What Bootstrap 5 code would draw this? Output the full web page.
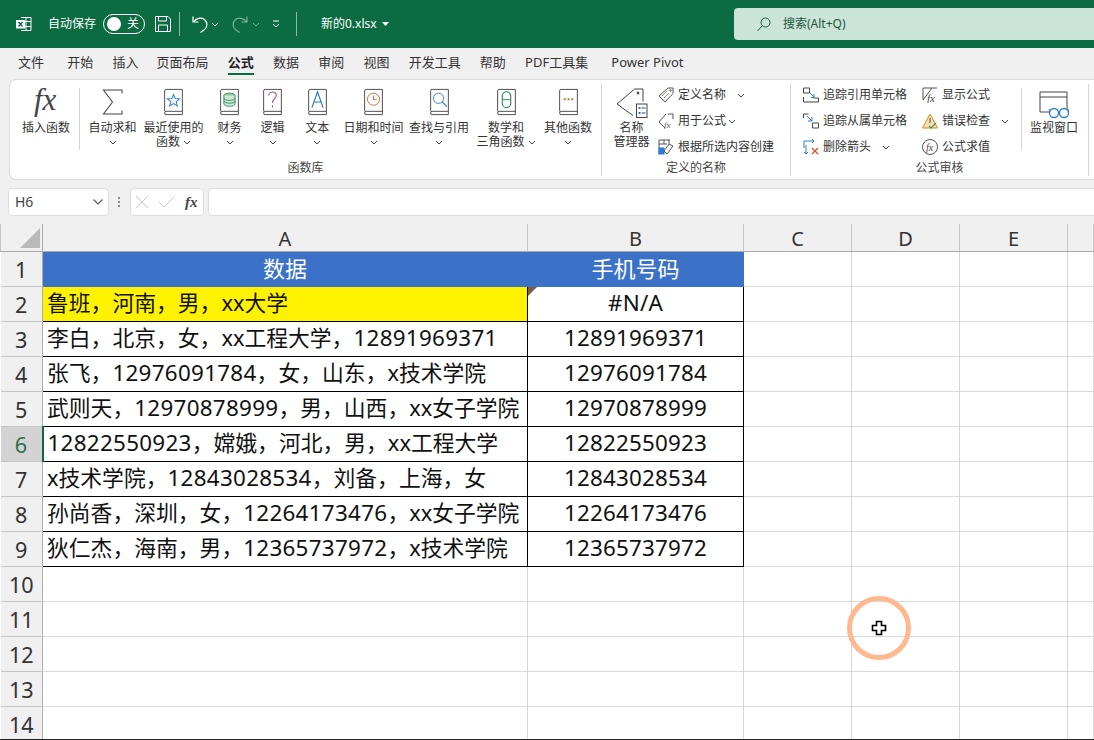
<!DOCTYPE html>
<html lang="zh"><head><meta charset="utf-8"><title>新的0.xlsx</title>
<link href="https://cdn.jsdelivr.net/npm/bootstrap@5.3.0/dist/css/bootstrap.min.css" rel="stylesheet">
<style>
html,body{height:740px;overflow:hidden}
body{width:1094px;position:relative;background:#f0f0f0;font-family:"Noto Sans","Noto Sans CJK SC",sans-serif;font-size:12px;color:#333;line-height:14px}
svg{display:block;flex:none}
.tb{height:48px;background:#0b6c41;color:#fff;padding-left:16px}
.logo{margin-right:16px}
.autosave{width:55px}
.tog{width:42px;height:20px;border:1px solid #fff;border-radius:10px;padding:0 5px 0 3px;margin-right:10px}
.tog i{width:14px;height:14px;background:#fff;border-radius:50%}
.tb-sep{width:1px;height:24px;background:#8fbba6}
.dim{opacity:.45}
.m2{margin-left:2px}.m6{margin-left:6px}
.m12{margin-left:12px}
.fname{margin-left:24px;width:55px;white-space:nowrap}
.searchbox{margin-left:auto;width:360px;height:32px;background:#cbe3d9;border-radius:4px 0 0 4px;padding-left:23px;color:#22583f;gap:12px}
.tabs{height:31px;padding-left:18px;gap:19.2px;font-size:13px;line-height:29px;color:#333}
.tabs span{height:27px;white-space:nowrap}
.tabs .on{font-weight:700;color:#222;border-bottom:2.5px solid #0b6c41}
.t4{margin-left:4px}.tm1{margin-left:-1px}
.rib{margin-left:9px;height:101px;background:#fff;border:1px solid #dcdcdc;border-right:0;border-radius:7px 0 0 7px;padding-left:6px}
.vline{width:1px;background:#d4d4d4;flex:none}
.gr1,.gr2,.gr3{border-right:1px solid #d4d4d4;margin-top:4px;height:92px;flex:none}
.gr1{width:586px}.gr2{width:189px}.gr3{width:298px}
.tops{height:76px;padding-top:1px}
.glabel{text-align:center;color:#444;height:16px;line-height:16px;white-space:nowrap}
.pr6{padding-right:6px}
.rb{padding-top:3px;text-align:center;white-space:nowrap;flex:none;color:#333;font-family:"Liberation Sans","Noto Sans CJK SC",sans-serif}
.rb svg{margin:0 auto 5px}
.rb .fxi{margin:-6px auto -1px}
.rb .cv{margin:5px auto 0}
.rb .cvi{display:inline-block;margin:0 0 1px 3px;vertical-align:middle}
.w60{width:60px;margin-right:3px}.w55{width:55px}.w66{width:66px}.w67{width:67px}.w45{width:45px}.w41{width:41px}.w48{width:48.5px}.w64{width:64px}.w57{width:57px}
.sep1{height:62px;margin:3px 5px 0 0}
.smc{display:flex;flex-direction:column;gap:8px;padding-top:1px}
.smr{height:18px;gap:4px;white-space:nowrap}
.cvr{margin-left:7px}
.cvn{margin-left:-2px}
.mgr{width:45px;margin:0 4px 0 7px}
.mgr svg{margin:0 auto 3px}
.col2{width:121px}
.col3{width:119px;margin-left:12px}
.col4{width:99px}
.watch{width:66px;padding:6px 2px 0 0}
.watch svg{margin-bottom:2px}
.wsep{height:62px;margin-top:3px}
.fb{height:28px;margin-top:8px;padding-left:8px;color:#333}
.wbox{background:#fff;border:1px solid #dedede;border-radius:4px;height:28px}
.nbox{width:101px;padding:0 5px 0 6px;font-size:14px;color:#444}
.dots{width:21px;gap:2px}
.dots i{width:2px;height:2px;background:#8a8a8a}
.fxbox{width:74px;padding:0 3px 0 5px;gap:6px}
.inbox{width:890px;margin-left:4px;border-right:0;border-radius:4px 0 0 4px}
.shtwrap{margin-top:8px}
table.sht{table-layout:fixed;border-collapse:collapse;width:1094px;background:#fff;font-size:21.8px;color:#111}
table.sht td,table.sht th{padding:0;border:1px solid #d9d9d9;overflow:hidden;white-space:nowrap;font-weight:400;height:35px;line-height:33px}
table.sht td{vertical-align:top;line-height:32px}
.c0{width:42px}.ca{width:485px}.cb{width:216px}.cc,.cd,.ce{width:108px}
table.sht thead th{height:27px;padding-top:3px;line-height:24px;background:#f0f0f0;text-align:center;font-size:20px;color:#333;border-color:#c6c6c6;border-top:0;border-bottom:1px solid #ababab}
table.sht thead th.cnr{padding-top:0;border-right:1px solid #ababab}
.cnr svg{margin-left:19px}
table.sht th.rh{background:#f0f0f0;text-align:center;font-size:21.6px;color:#333;border-color:#c6c6c6;border-left:0;border-right:1px solid #ababab}
table.sht th.rsel{background:#d3d3d3;color:#2f6e50;border-right:2px solid #0d6b41}
table.sht td.hd{background:#3b72c8;color:#fff;text-align:center;border-color:#3b72c8;font-size:22px}
table.sht td.bk{border:1px solid #000;padding-left:4px}
table.sht td.num{border:1px solid #000;text-align:center;font-size:22.4px;letter-spacing:.2px}
table.sht td.yel{background:#fff200}
table.sht td.err{position:relative}
.dg{font-size:22.4px;letter-spacing:.3px}
.errtri{position:absolute;left:0;top:0;width:0;height:0;border-top:9px solid #7a5a48;border-right:9px solid transparent}
.ring{position:absolute;left:847px;top:596px;width:64px;height:64px;border:5px solid #ffb98f;border-radius:50%}
.cursor{position:absolute;left:871px;top:620px}
.botline{position:absolute;left:0;right:0;bottom:0;height:1px;background:#222}
</style></head><body>
<svg width="0" height="0" class="position-absolute">
<symbol id="book" viewBox="0 0 22 30"><path d="M1.500 25V3q0-1.500 1.500-1.500H20.500V28.500H3q-1.500 0-1.500-1.700T3 25H20.500" fill="#fff" stroke="#444" stroke-width="1"/></symbol>
<symbol id="cv" viewBox="0 0 8 5"><path d="M1 1l3 3 3-3" fill="none" stroke="#444" stroke-width="1"/></symbol>
</svg>

<div class="tb d-flex align-items-center">
 <svg class="logo" width="16" height="16" viewBox="0 0 16 16"><path d="M5 1.500h10v13H5" fill="#0b6c41" stroke="#fff"/><path d="M10 1.500v13M5 5.500h10M5 10.500h10" stroke="#fff"/><rect x="0" y="4" width="9" height="8.500" fill="#fff"/><path d="M2.500 6l4 4.500m0-4.500l-4 4.500" stroke="#0b6c41" stroke-width="1.400"/></svg>
 <span class="autosave">自动保存</span>
 <div class="tog d-flex align-items-center justify-content-between"><i></i><span>关</span></div>
 <svg width="16" height="16" viewBox="0 0 16 16" fill="none" stroke="#fff"><path d="M.5.500h12.500l2.500 2.500v12.500H.5zM3.500.500v4.500h8V.500M3.500 15.500V9h9v6.500"/></svg>
 <div class="tb-sep ms-2 me-2"></div>
 <svg class="ms-1" width="17" height="18" viewBox="0 0 17 18" fill="none" stroke="#fff" stroke-width="1.200"><path d="M1 1.500v5.500h5.500M1.500 7C4 3 9 2 12.500 4.500c3.500 3 3 8-.5 10.500l-3.500 2.500"/></svg>
 <svg class="m2" width="8" height="5" viewBox="0 0 8 5"><path d="M1 1l3 3 3-3" fill="none" stroke="#fff"/></svg>
 <svg class="dim m12" width="17" height="18" viewBox="0 0 17 18" fill="none" stroke="#fff" stroke-width="1.200"><path d="M16 1.500v5.500h-5.500M15.500 7C13 3 8 2 4.500 4.500c-3.500 3-3 8 .5 10.500l3.500 2.500"/></svg>
 <svg class="dim ms-1" width="8" height="5" viewBox="0 0 8 5"><path d="M1 1l3 3 3-3" fill="none" stroke="#fff"/></svg>
 <svg class="m12" width="8" height="8" viewBox="0 0 8 8" fill="none" stroke="#fff"><path d="M1 1h6M1 4l3 3 3-3"/></svg>
 <div class="tb-sep ms-3"></div>
 <span class="fname">新的0.xlsx</span>
 <svg class="m6" width="7" height="4" viewBox="0 0 7 4"><path d="M0 0h7L3.500 4z" fill="#fff"/></svg>
 <div class="searchbox d-flex align-items-center">
  <svg width="14" height="15" viewBox="0 0 14 15" fill="none" stroke="#22583f"><circle cx="8.500" cy="5.500" r="4.500"/><path d="M5 9l-4.500 5"/></svg>
  <span>搜索(Alt+Q)</span>
 </div>
</div>

<div class="tabs d-flex">
 <span>文件</span><span class="t4">开始</span><span>插入</span><span class="tm1">页面布局</span><span class="on">公式</span><span>数据</span><span>审阅</span><span>视图</span><span>开发工具</span><span>帮助</span><span>PDF工具集</span><span class="t4">Power Pivot</span>
</div>

<div class="rib d-flex">
 <div class="gr1">
  <div class="tops d-flex">
   <div class="rb w60"><svg class="fxi" width="36" height="40" viewBox="0 0 36 40"><text x="6" y="28" font-family="Liberation Serif" font-style="italic" font-size="31" fill="#444">fx</text></svg>插入函数</div>
   <div class="vline sep1"></div>
   <div class="rb w55"><svg width="21" height="28" viewBox="0 0 22 28" fill="none" stroke="#444" stroke-width="1.100"><path d="M21 5V1.500H1.500L11 14 1.500 26.500H21V23"/></svg>自动求和<svg class="cv" width="8" height="5"><use href="#cv"/></svg></div>
   <div class="rb w67"><svg width="21" height="28" viewBox="0 0 22 30"><use href="#book" width="22" height="30"/><path d="M11 7l1.800 4.300 4.700.3-3.600 3 1.200 4.600-4.100-2.500-4.100 2.500 1.200-4.600-3.600-3 4.700-.3z" fill="none" stroke="#2b7cd3" stroke-width="1.100"/></svg>最近使用的<br>函数<svg class="cvi" width="8" height="5"><use href="#cv"/></svg></div>
   <div class="rb w45"><svg width="21" height="28" viewBox="0 0 22 30"><use href="#book" width="22" height="30"/><ellipse cx="11" cy="8" rx="6" ry="2.500" fill="#8ec9a7" stroke="#2f8a58"/><path d="M5 8v9c0 3.500 12 3.500 12 0V8M5 11c0 3 12 3 12 0M5 14c0 3 12 3 12 0" fill="#cfe7d8" stroke="#2f8a58"/></svg>财务<svg class="cv" width="8" height="5"><use href="#cv"/></svg></div>
   <div class="rb w41"><svg width="21" height="28" viewBox="0 0 22 30"><use href="#book" width="22" height="30"/><path d="M7 8c0-5 8-5 8 0 0 3.500-4 3.500-4 8M11 18.500v2.500" fill="none" stroke="#9a5ba5" stroke-width="1.200"/></svg>逻辑<svg class="cv" width="8" height="5"><use href="#cv"/></svg></div>
   <div class="rb w48"><svg width="21" height="28" viewBox="0 0 22 30"><use href="#book" width="22" height="30"/><path d="M5 21L11 4l6 17M7 15h8" fill="none" stroke="#2b7cd3" stroke-width="1.300"/></svg>文本<svg class="cv" width="8" height="5"><use href="#cv"/></svg></div>
   <div class="rb w64"><svg width="21" height="28" viewBox="0 0 22 30"><use href="#book" width="22" height="30"/><circle cx="11" cy="12" r="6.500" fill="none" stroke="#c8693a"/><path d="M11 8v4.500h3.500" fill="none" stroke="#c8693a"/></svg>日期和时间<svg class="cv" width="8" height="5"><use href="#cv"/></svg></div>
   <div class="rb w67"><svg width="21" height="28" viewBox="0 0 22 30"><use href="#book" width="22" height="30"/><circle cx="10" cy="11" r="5.500" fill="none" stroke="#2b7cd3"/><path d="M14 15l5 5" stroke="#2b7cd3" stroke-width="1.200"/></svg>查找与引用<svg class="cv" width="8" height="5"><use href="#cv"/></svg></div>
   <div class="rb w67"><svg width="21" height="28" viewBox="0 0 22 30"><use href="#book" width="22" height="30"/><rect x="6.500" y="4" width="9" height="17" rx="4.500" fill="none" stroke="#2f8a58" stroke-width="1.200"/><path d="M7 12.500h8" stroke="#2f8a58"/></svg>数学和<br>三角函数<svg class="cvi" width="8" height="5"><use href="#cv"/></svg></div>
   <div class="rb w57"><svg width="21" height="28" viewBox="0 0 22 30"><use href="#book" width="22" height="30"/><path d="M6 12h2M10 12h2M14 12h2" stroke="#c8693a" stroke-width="2"/></svg>其他函数<svg class="cv" width="8" height="5"><use href="#cv"/></svg></div>
  </div>
  <div class="glabel pr6">函数库</div>
 </div>

 <div class="gr2">
  <div class="tops d-flex">
   <div class="rb mgr"><svg width="32" height="30" viewBox="0 0 32 30" fill="none" stroke="#444"><path d="M27 13.500V1h-8.500L1 16l16 11.500"/><circle cx="22" cy="5" r="1" fill="#444"/><rect x="20.500" y="16" width="10.500" height="13.500" fill="#fff"/><path d="M22.500 20h2M22.500 25h2" stroke="#2b7cd3" stroke-width="2"/><path d="M25.500 20h4M25.500 25h4"/></svg>名称<br>管理器</div>
   <div class="col2 smc">
    <div class="smr d-flex align-items-center"><svg width="16" height="16" viewBox="0 0 16 16" fill="none" stroke="#555"><path d="M10 1h5v5.500L7 15 1 9z"/><path d="M4 9l5-5M6 11l5-5" stroke="#b98a6a"/><circle cx="12.500" cy="3.500" r=".8"/></svg><span>定义名称</span><svg class="cvr" width="8" height="5"><use href="#cv"/></svg></div>
    <div class="smr d-flex align-items-center"><svg width="16" height="16" viewBox="0 0 16 16" fill="none" stroke="#555"><path d="M10 1h5v5M7 15L1 9l7-8"/><text x="6" y="15" font-family="Liberation Serif" font-style="italic" font-size="9" fill="#555" stroke="none">fx</text></svg><span>用于公式</span><svg class="cvn" width="8" height="5"><use href="#cv"/></svg></div>
    <div class="smr d-flex align-items-center"><svg width="16" height="16" viewBox="0 0 16 16" fill="none" stroke="#555"><path d="M1 1h11M1 1v14M6 1v4M11 1v4M1 5h8"/><rect x="1" y="9" width="5" height="6" fill="#2b7cd3" stroke="#2b7cd3"/><path d="M15 7l-6 8-3-3 5-7z" fill="#fff"/></svg><span>根据所选内容创建</span></div>
   </div>
  </div>
  <div class="glabel">定义的名称</div>
 </div>

 <div class="gr3">
  <div class="tops d-flex">
   <div class="col3 smc">
    <div class="smr d-flex align-items-center"><svg width="16" height="16" viewBox="0 0 16 16" fill="none" stroke="#444"><path d="M.5 1h6v5h-6zM.5 10v5h15v-4h-5"/><path d="M7 6l4 4" stroke="#2b7cd3"/><path d="M11 7v3.500H8" stroke="#2b7cd3"/></svg><span>追踪引用单元格</span></div>
    <div class="smr d-flex align-items-center"><svg width="16" height="16" viewBox="0 0 16 16" fill="none" stroke="#444"><path d="M.5 5V1h5M9.500 10h6v5h-6z"/><path d="M4 3l5 5" stroke="#2b7cd3"/><path d="M9 4v4H5" stroke="#2b7cd3"/></svg><span>追踪从属单元格</span></div>
    <div class="smr d-flex align-items-center"><svg width="16" height="16" viewBox="0 0 16 16" fill="none"><path d="M1 9V2h10M9 0l2 2-2 2M3 15V6M1 13l2 2 2-2" stroke="#2b7cd3"/><path d="M9 9l6 6m0-6l-6 6" stroke="#d2492a" stroke-width="1.200"/></svg><span>删除箭头</span><svg class="cvr" width="8" height="5"><use href="#cv"/></svg></div>
   </div>
   <div class="col4 smc">
    <div class="smr d-flex align-items-center"><svg width="16" height="16" viewBox="0 0 16 16" fill="none" stroke="#555"><path d="M15 1H1v12"/><path d="M1 13L10 1" /><text x="5" y="15" font-family="Liberation Serif" font-style="italic" font-size="11" fill="#444" stroke="none">fx</text></svg><span>显示公式</span></div>
    <div class="smr d-flex align-items-center"><svg width="16" height="16" viewBox="0 0 16 16"><path d="M8 1l7.500 14H.5z" fill="#fbe3b3" stroke="#d88a1d"/><path d="M8 5v5" stroke="#444"/><path d="M7 13l2 2 5-5" fill="none" stroke="#3a9a5c" stroke-width="1.200"/></svg><span>错误检查</span><svg class="cvr" width="8" height="5"><use href="#cv"/></svg></div>
    <div class="smr d-flex align-items-center"><svg width="16" height="16" viewBox="0 0 16 16" fill="none" stroke="#555"><circle cx="8" cy="8" r="7.500"/><text x="4" y="12" font-family="Liberation Serif" font-style="italic" font-size="10" fill="#444" stroke="none">fx</text></svg><span>公式求值</span></div>
   </div>
   <div class="vline wsep"></div>
   <div class="rb watch"><svg width="30" height="28" viewBox="0 0 30 28" fill="none"><path d="M1 21V1h27v17M1 6h27M1 21h9" stroke="#444"/><circle cx="15" cy="22" r="4.500" stroke="#2b7cd3" stroke-width="1.300"/><circle cx="25" cy="22" r="4.500" stroke="#2b7cd3" stroke-width="1.300"/><path d="M19 21h2M11 21l-1-3M29 21l1-3" stroke="#2b7cd3"/></svg>监视窗口</div>
  </div>
  <div class="glabel">公式审核</div>
 </div>
</div>

<div class="fb d-flex">
 <div class="wbox nbox d-flex align-items-center justify-content-between"><span>H6</span><svg width="10" height="6" viewBox="0 0 10 6"><path d="M.5.500L5 5 9.500.500" fill="none" stroke="#555" stroke-width="1.100"/></svg></div>
 <div class="dots d-flex flex-column align-items-center justify-content-center"><i></i><i></i><i></i></div>
 <div class="wbox fxbox d-flex align-items-center">
  <svg width="12" height="12" viewBox="0 0 12 12"><path d="M0 0l12 12m0-12L0 12" stroke="#c8c8c8"/></svg>
  <svg class="ms-1" width="17" height="12" viewBox="0 0 17 12"><path d="M1 6l5 5L16 1" fill="none" stroke="#c8c8c8"/></svg>
  <svg class="ms-1" width="15" height="18" viewBox="0 0 15 18"><text x="0" y="14" font-family="Liberation Serif" font-style="italic" font-weight="700" font-size="15" fill="#444">fx</text></svg>
 </div>
 <div class="wbox inbox"></div>
</div>

<div class="shtwrap">
<table class="sht">
<colgroup><col class="c0"><col class="ca"><col class="cb"><col class="cc"><col class="cd"><col class="ce"><col></colgroup>
<thead><tr><th class="cnr"><svg width="20" height="20" viewBox="0 0 20 20"><path d="M20 0v20H0z" fill="#b9b9b9"/></svg></th><th>A</th><th>B</th><th>C</th><th>D</th><th>E</th><th></th></tr></thead>
<tbody>
<tr><th class="rh">1</th><td class="hd">数据</td><td class="hd">手机号码</td><td></td><td></td><td></td><td></td></tr>
<tr><th class="rh">2</th><td class="bk yel">鲁班，河南，男，xx大学</td><td class="num err"><span class="errtri"></span>#N/A</td><td></td><td></td><td></td><td></td></tr>
<tr><th class="rh">3</th><td class="bk">李白，北京，女，xx工程大学，<span class="dg">12891969371</span></td><td class="num">12891969371</td><td></td><td></td><td></td><td></td></tr>
<tr><th class="rh">4</th><td class="bk">张飞，<span class="dg">12976091784</span>，女，山东，x技术学院</td><td class="num">12976091784</td><td></td><td></td><td></td><td></td></tr>
<tr><th class="rh">5</th><td class="bk">武则天，<span class="dg">12970878999</span>，男，山西，xx女子学院</td><td class="num">12970878999</td><td></td><td></td><td></td><td></td></tr>
<tr><th class="rh rsel">6</th><td class="bk"><span class="dg">12822550923</span>，嫦娥，河北，男，xx工程大学</td><td class="num">12822550923</td><td></td><td></td><td></td><td></td></tr>
<tr><th class="rh">7</th><td class="bk">x技术学院，<span class="dg">12843028534</span>，刘备，上海，女</td><td class="num">12843028534</td><td></td><td></td><td></td><td></td></tr>
<tr><th class="rh">8</th><td class="bk">孙尚香，深圳，女，<span class="dg">12264173476</span>，xx女子学院</td><td class="num">12264173476</td><td></td><td></td><td></td><td></td></tr>
<tr><th class="rh">9</th><td class="bk">狄仁杰，海南，男，<span class="dg">12365737972</span>，x技术学院</td><td class="num">12365737972</td><td></td><td></td><td></td><td></td></tr>
<tr><th class="rh">10</th><td></td><td></td><td></td><td></td><td></td><td></td></tr>
<tr><th class="rh">11</th><td></td><td></td><td></td><td></td><td></td><td></td></tr>
<tr><th class="rh">12</th><td></td><td></td><td></td><td></td><td></td><td></td></tr>
<tr><th class="rh">13</th><td></td><td></td><td></td><td></td><td></td><td></td></tr>
<tr><th class="rh">14</th><td></td><td></td><td></td><td></td><td></td><td></td></tr>
</tbody></table>
</div>
<div class="ring"></div>
<svg class="cursor" width="16" height="16" viewBox="0 0 16 16"><path d="M5.500 1.500h5v4h4v5h-4v4h-5v-4h-4v-5h4z" fill="#fff" stroke="#000" stroke-width="1.600"/></svg>
<div class="botline"></div>
<script src="https://cdn.jsdelivr.net/npm/bootstrap@5.3.0/dist/js/bootstrap.bundle.min.js"></script>
</body></html>
